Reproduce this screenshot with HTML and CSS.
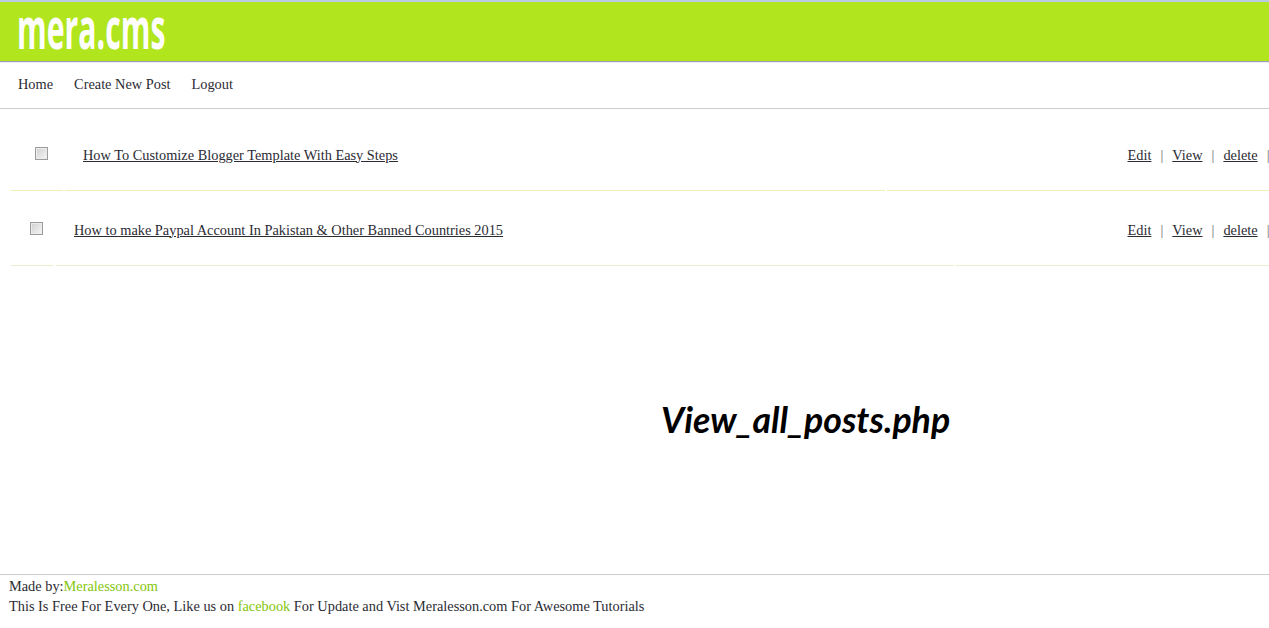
FILE: index.html
```html
<!DOCTYPE html>
<html lang="en">
<head>
    <meta charset="UTF-8">
    <meta name="viewport" content="width=device-width, initial-scale=1.0">
    <title>View all posts</title>
    <link rel="stylesheet" href="styles.css">
</head>
<body>
    <header class="site-header">
        <a href="#" class="logo">mera.cms</a>
    </header>

    <nav class="main-nav">
        <a href="#">Home</a>
        <a href="#">Create New Post</a>
        <a href="#">Logout</a>
    </nav>

    <!-- Posts -->
    <main class="posts">
        <div class="post-row post-row-first">
            <div class="cell cell-check"><input type="checkbox" class="post-check"></div>
            <div class="cell cell-title"><a href="#">How To Customize Blogger Template With Easy Steps</a></div>
            <div class="cell cell-actions">
                <a href="#">Edit</a><span class="sep">|</span><a href="#">View</a><span class="sep">|</span><a href="#">delete</a><span class="sep sep-last">|</span>
            </div>
        </div>
        <div class="post-row post-row-second">
            <div class="cell cell-check"><input type="checkbox" class="post-check"></div>
            <div class="cell cell-title"><a href="#">How to make Paypal Account In Pakistan &amp; Other Banned Countries 2015</a></div>
            <div class="cell cell-actions">
                <a href="#">Edit</a><span class="sep">|</span><a href="#">View</a><span class="sep">|</span><a href="#">delete</a><span class="sep sep-last">|</span>
            </div>
        </div>
    </main>

    <div class="page-caption">View_all_posts.php</div>

    <footer class="site-footer">
        <div>Made by:<a href="#">Meralesson.com</a></div>
        <div>This Is Free For Every One, Like us on <a href="#">facebook</a> For Update and Vist Meralesson.com For Awesome Tutorials</div>
    </footer>
</body>
</html>
```

FILE: styles.css
```css
html, body {
    height: 100%;
}
body {
    margin: 0;
    display: flex;
    flex-direction: column;
    overflow: hidden;
    position: relative;
    background-color: #fff;
    color: #2b2b33;
    font-family: "Liberation Serif", "Times New Roman", serif;
    font-size: 14.35px;
}
a {
    color: inherit;
}
.site-header {
    height: 59px;
    flex: none;
    background-color: #b1e61e;
    border-top: 2px solid #b9cbe0;
    box-shadow: 0 1px 1px rgba(60, 60, 110, 0.5);
    padding-left: 17px;
}
.logo {
    display: inline-block;
    margin-top: 3px;
    color: #fdfdfd;
    font-family: "Open Sans", sans-serif;
    font-size: 42px;
    font-weight: 700;
    line-height: 44px;
    text-decoration: none;
    transform: scale(0.72, 1.38);
    transform-origin: left center;
}
.main-nav {
    flex: none;
    display: flex;
    align-items: center;
    gap: 21px;
    height: 44px;
    margin-top: 1px;
    padding: 0 0 2px 18px;
    border-bottom: 1px solid #ccc;
}
.main-nav a {
    text-decoration: none;
}
.posts {
    flex: 1;
    padding-left: 11px;
}
.post-row {
    display: flex;
    width: 1258px;
    height: 75px;
}
.post-row-first {
    height: 82px;
}
.cell {
    display: flex;
    align-items: center;
    height: 100%;
    box-sizing: border-box;
    border-bottom: 1px solid #eff0b8;
    padding-top: 11px;
}
.post-row-second .cell {
    border-bottom-color: #ecefd0;
    padding-top: 4px;
}
.cell-check {
    flex: none;
    width: 52px;
    margin-right: 2px;
    padding-top: 0;
    padding-left: 24px;
}
.post-row-second .cell-check {
    width: 43px;
    padding-top: 0;
    padding-left: 19px;
}
/* grey square checkbox */
.post-check {
    appearance: none;
    box-sizing: border-box;
    width: 13px;
    height: 13px;
    margin: 7px 0 0;
    border: 1px solid #9c9c9c;
    border-radius: 0;
    background: linear-gradient(135deg, #cfcfcf, #f6f6f6);
    box-shadow: inset 0 0 0 1px #ececec;
}
.post-row-second .post-check {
    margin-top: 1px;
}
.cell-title {
    flex: none;
    width: 820px;
    padding-left: 18px;
    margin-right: 2px;
}
.post-row-second .cell-title {
    width: 898px;
}
.cell-actions {
    flex: 1;
    padding-left: 240.5px;
    white-space: nowrap;
}
.post-row-second .cell-actions {
    padding-left: 171.5px;
}
.sep {
    margin: 0 9px;
    color: #6b6b6b;
}
.sep-last {
    margin-right: 0;
}
.page-caption {
    position: absolute;
    left: 661px;
    top: 398px;
    color: #000;
    font-family: "Lato", sans-serif;
    font-size: 35.7px;
    font-style: italic;
    font-weight: 700;
}
.site-footer {
    flex: none;
    height: 52px;
    padding: 1px 0 0 9px;
    border-top: 1px solid #ccc;
    line-height: 20px;
}
.site-footer a {
    color: #84c60c;
    text-decoration: none;
}
```
